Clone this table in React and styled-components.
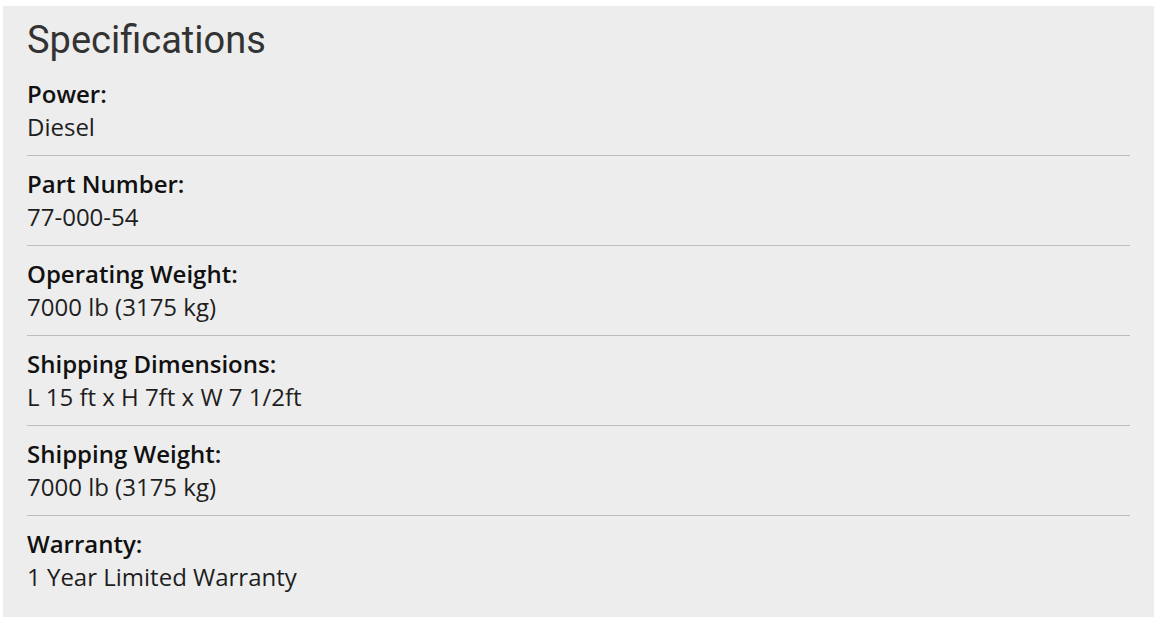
import React from "react";
import styled, { createGlobalStyle } from "styled-components";

const GlobalStyle = createGlobalStyle`
  html, body {
    margin: 0;
    padding: 0;
    background: #fff;
  }
`;

const specs = [
  { label: "Power:", value: "Diesel" },
  { label: "Part Number:", value: "77-000-54" },
  { label: "Operating Weight:", value: "7000 lb (3175 kg)" },
  { label: "Shipping Dimensions:", value: "L 15 ft x H 7ft x W 7 1/2ft" },
  { label: "Shipping Weight:", value: "7000 lb (3175 kg)" },
  { label: "Warranty:", value: "1 Year Limited Warranty" },
];

const App = () => {
  return (
    <>
      <GlobalStyle />
      <Panel>
        <Title>Specifications</Title>
        <List>
          {specs.map((s, i) => (
            <Row key={i} last={i === specs.length - 1}>
              <Label>{s.label}</Label>
              <Value>{s.value}</Value>
            </Row>
          ))}
        </List>
      </Panel>
    </>
  );
};

export default App;

const Panel = styled.section`
  margin: 6px 8px 6px 3px;
  width: 1151px;
  box-sizing: border-box;
  background: #ededed;
  padding: 12px 24px 12px 24px;
`;

const Title = styled.h2`
  margin: 0 0 4px 0;
  font-family: Roboto, "Liberation Sans", sans-serif;
  font-weight: 400;
  font-size: 38px;
  line-height: 44px;
  color: #333;
`;

const List = styled.div`
  display: flex;
  flex-direction: column;
`;

const Row = styled.div.withConfig({
  shouldForwardProp: (p) => p !== "last",
})`
  display: flex;
  flex-direction: column;
  padding: 11px 0 12px 0;
  border-bottom: ${(p) => (p.last ? "none" : "1px solid #bdbdbd")};
  font-family: "Open Sans", "Liberation Sans", sans-serif;
  font-size: 24px;
  line-height: 33px;
`;

const Label = styled.span`
  font-weight: 600;
  color: #111;
`;

const Value = styled.span`
  font-weight: 400;
  color: #1e1e1e;
`;
